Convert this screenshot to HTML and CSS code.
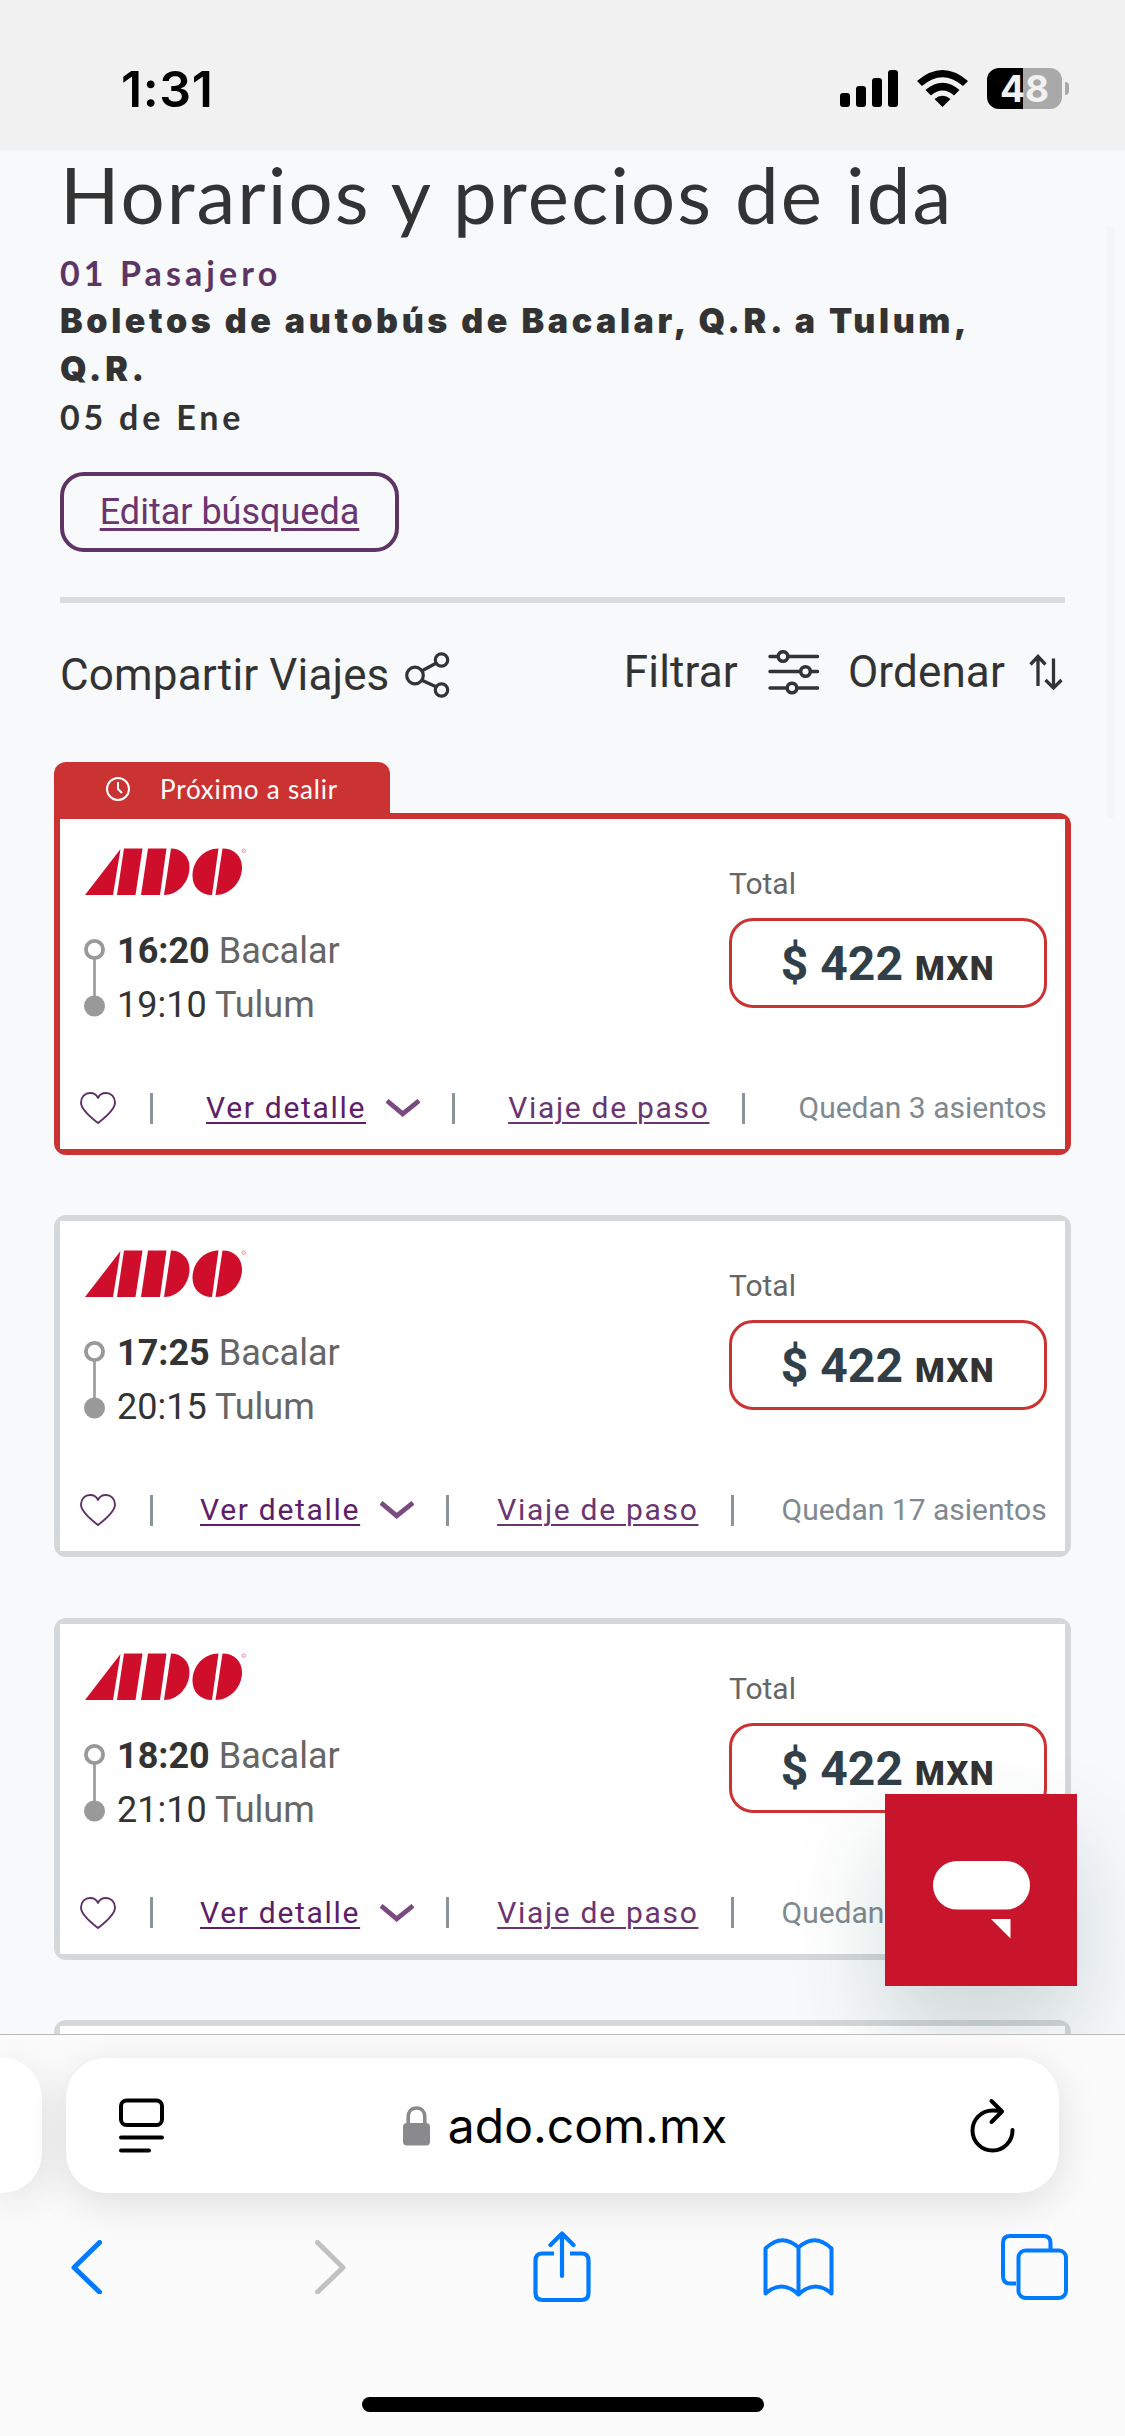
FILE: index.html
```html
<!DOCTYPE html>
<html lang="es">
<head>
<meta charset="utf-8">
<title>Horarios y precios de ida</title>
<link rel="stylesheet" href="styles.css">
</head>
<body>
<svg class="sprite" width="0" height="0" aria-hidden="true">
  <symbol id="logo" viewBox="0 0 162 48">
    <g fill="#cf0e2c">
      <path d="M0 47 35.500 1 28 47Z"/>
      <path d="M39 .5H57.500L50.500 47H32Z"/>
      <path d="M63 .5H81.500L75 47H56Z"/>
      <path d="M86 .5C96 .5 104.500 8 104.500 19 104.500 34 93 47 79 47Z"/>
      <path d="M133.500 .5 127 47C115 47 107.500 39 107.500 27.500 107.500 13 119 .5 133.500 .5Z"/>
      <path d="M137.500 .5C149 .5 157 8 157 19.500 157 34 145 47 130.500 47Z"/>
    </g>
    <circle cx="158.700" cy="2.700" r="1.700" fill="none" stroke="#e58a97" stroke-width="1"/>
  </symbol>
  <symbol id="route" viewBox="0 0 21 78">
    <path d="M10.500 20V60" stroke="#999" stroke-width="2.600"/>
    <circle cx="10.500" cy="10.500" r="8.600" fill="#fff" stroke="#999" stroke-width="3.800"/>
    <circle cx="10.500" cy="67" r="10.500" fill="#999"/>
  </symbol>
  <symbol id="heart" viewBox="0 0 36 32">
    <path d="M18 31C13 27 1 18.500 1 10.500 1 5 5 1 10 1 14 1 17 3.500 18 6 19 3.500 22 1 26 1 31 1 35 5 35 10.500 35 18.500 23 27 18 31Z" fill="none" stroke="#5f3068" stroke-width="1.900" stroke-linejoin="round"/>
  </symbol>
  <symbol id="chevron" viewBox="0 0 34 18">
    <path d="M1 1.800 16.700 14.800 33 1.800" fill="none" stroke="#7a4a80" stroke-width="4.800"/>
  </symbol>
</svg>

<div class="phone">
  <header class="status">
    <span class="clock">1:31</span>
    <div class="status-icons">
      <svg class="signal" width="58" height="37" viewBox="0 0 58 37"><rect y="23" width="10" height="14" rx="3"/><rect x="16" y="16" width="10" height="21" rx="3"/><rect x="32" y="8" width="10" height="29" rx="3"/><rect x="48" width="10" height="37" rx="3"/></svg>
      <svg class="wifi" width="51" height="37" viewBox="0 0 51 37"><path d="M0 11Q25.500-11 51 11L46 16Q25.500-1.500 5 16Z"/><path d="M8.500 20Q25.500 5.500 42.500 20L37 25.500Q25.500 15.500 14 25.500Z"/><path d="M17.500 29Q25.500 22.500 33.500 29L25.500 37Z"/></svg>
      <div class="battery"><span class="battery-text">48</span></div>
      <span class="battery-cap"></span>
    </div>
  </header>

  <main class="page">
    <h1 class="title">Horarios y precios de ida</h1>
    <p class="passengers">01 Pasajero</p>
    <p class="journey">Boletos de autobús de Bacalar, Q.R. a Tulum,<br>Q.R.</p>
    <p class="date">05 de Ene</p>
    <a class="edit"><span class="edit-text">Editar búsqueda</span></a>
    <hr class="rule">
    <div class="tools">
      <div class="tool tool-share"><span>Compartir Viajes</span>
        <svg width="45" height="46" viewBox="0 0 45 46" fill="none" stroke="#333" stroke-width="3.200"><circle cx="10" cy="23.500" r="8.300"/><circle cx="36.500" cy="8" r="6.200"/><circle cx="36.500" cy="38" r="6.200"/><path d="M17.500 18.500 30.500 11.500M17.500 28.500 31.500 35"/></svg>
      </div>
      <div class="tool tool-filter"><span>Filtrar</span>
        <svg width="51" height="45" viewBox="0 0 51 45" fill="none" stroke="#333" stroke-width="3.500" stroke-linecap="round"><path d="M2 6.500H49.500M2 21.500H49.500M2 38H49.500"/><g fill="#f8f9fb"><circle cx="15" cy="6.500" r="4.800"/><circle cx="37.500" cy="21.500" r="4.800"/><circle cx="24" cy="38" r="4.800"/></g></svg>
      </div>
      <div class="tool tool-sort"><span>Ordenar</span>
        <svg width="34" height="37" viewBox="0 0 34 37" fill="none" stroke="#333" stroke-width="3.300"><path d="M9 32V3M1.500 10.500 9 2.500 16.500 10.500M24.500 4.500V34M16.500 26 24.500 34 32.500 26"/></svg>
      </div>
    </div>

    <div class="trips">
      <div class="badge">
        <svg width="24" height="24" viewBox="0 0 24 24" fill="none" stroke="#fff" stroke-width="2"><circle cx="12" cy="12" r="11"/><path d="M12 5V12L16 16"/></svg>
        <span class="badge-text">Próximo a salir</span>
      </div>
      <article class="card card-next">
        <div class="card-top">
          <div class="trip">
            <svg class="logo" width="162" height="48"><use href="#logo"/></svg>
            <div class="stops">
              <svg width="21" height="78"><use href="#route"/></svg>
              <div class="stop-list"><div class="stop"><b class="time">16:20</b> Bacalar</div><div class="stop"><span class="time">19:10</span> Tulum</div></div>
            </div>
          </div>
          <div class="fare"><span class="total">Total</span><div class="price"><span class="amount">$ 422</span><span class="currency">MXN</span></div></div>
        </div>
        <div class="card-foot">
          <svg width="36" height="32"><use href="#heart"/></svg><i class="bar bar-first"></i>
          <a class="link detail">Ver detalle</a><svg class="chev" width="34" height="18"><use href="#chevron"/></svg><i class="bar"></i>
          <a class="link stopover">Viaje de paso</a><i class="bar"></i><span class="seats">Quedan 3 asientos</span>
        </div>
      </article>
      <article class="card">
        <div class="card-top">
          <div class="trip">
            <svg class="logo" width="162" height="48"><use href="#logo"/></svg>
            <div class="stops">
              <svg width="21" height="78"><use href="#route"/></svg>
              <div class="stop-list"><div class="stop"><b class="time">17:25</b> Bacalar</div><div class="stop"><span class="time">20:15</span> Tulum</div></div>
            </div>
          </div>
          <div class="fare"><span class="total">Total</span><div class="price"><span class="amount">$ 422</span><span class="currency">MXN</span></div></div>
        </div>
        <div class="card-foot">
          <svg width="36" height="32"><use href="#heart"/></svg><i class="bar bar-first"></i>
          <a class="link detail">Ver detalle</a><svg class="chev" width="34" height="18"><use href="#chevron"/></svg><i class="bar"></i>
          <a class="link stopover">Viaje de paso</a><i class="bar"></i><span class="seats">Quedan 17 asientos</span>
        </div>
      </article>
      <article class="card">
        <div class="card-top">
          <div class="trip">
            <svg class="logo" width="162" height="48"><use href="#logo"/></svg>
            <div class="stops">
              <svg width="21" height="78"><use href="#route"/></svg>
              <div class="stop-list"><div class="stop"><b class="time">18:20</b> Bacalar</div><div class="stop"><span class="time">21:10</span> Tulum</div></div>
            </div>
          </div>
          <div class="fare"><span class="total">Total</span><div class="price"><span class="amount">$ 422</span><span class="currency">MXN</span></div></div>
        </div>
        <div class="card-foot">
          <svg width="36" height="32"><use href="#heart"/></svg><i class="bar bar-first"></i>
          <a class="link detail">Ver detalle</a><svg class="chev" width="34" height="18"><use href="#chevron"/></svg><i class="bar"></i>
          <a class="link stopover">Viaje de paso</a><i class="bar"></i><span class="seats">Quedan</span>
        </div>
      </article>
      <article class="card"></article>
    </div>
    <span class="scrollbar"></span>
    <button class="chat" aria-label="Chat">
      <svg width="97" height="78" viewBox="0 0 97 78" fill="#fff"><rect width="97" height="48.500" rx="24.250"/><path d="M58 58H77.500V77.500Z"/></svg>
    </button>
  </main>

  <footer class="browser">
    <div class="tabs">
      <div class="tab-prev"></div>
      <div class="address">
        <svg width="45" height="55" viewBox="0 0 45 55" fill="none" stroke="#000" stroke-width="4" stroke-linecap="round"><rect x="2" y="2.500" width="41" height="24.500" rx="5.500"/><path d="M2 39.500H43M2 52.500H30"/></svg>
        <div class="host">
          <svg width="27" height="40" viewBox="0 0 27 40"><path d="M5.200 18V11C5.200 5.500 8.500 2 13.500 2S21.800 5.500 21.800 11V18" fill="none" stroke="#8a898e" stroke-width="3.600"/><rect y="17" width="27" height="22.500" rx="4" fill="#8a898e"/></svg>
          <span class="host-text">ado.com.mx</span>
        </div>
        <svg width="45" height="55" viewBox="0 0 45 55" fill="none" stroke="#000" stroke-width="4" stroke-linecap="round" stroke-linejoin="round"><path d="M42.500 32A20 20 0 1 1 22.500 12.500Q28 12.500 32 13.500M21.500 3 32 13.500 21.500 24"/></svg>
      </div>
    </div>
    <nav class="toolbar">
      <svg class="back" width="31" height="54" viewBox="0 0 31 54" fill="none" stroke="#007aff" stroke-width="5" stroke-linecap="round" stroke-linejoin="round"><path d="M28.500 2.500 3 27.500 28.500 52"/></svg>
      <svg class="forward" width="31" height="54" viewBox="0 0 31 54" fill="none" stroke="#c1c1c2" stroke-width="5" stroke-linecap="round" stroke-linejoin="round"><path d="M2.500 2.500 28 27.500 2.500 52"/></svg>
      <svg class="share" width="58" height="72" viewBox="0 0 58 72" fill="none" stroke="#007aff" stroke-width="4.200"><path d="M21 22.500H9.500Q2.500 22.500 2.500 29.500V62Q2.500 69 9.500 69H48.500Q55.500 69 55.500 62V29.500Q55.500 22.500 48.500 22.500H37"/><path d="M29 45V3M17.500 14 29 2.500 40.500 14" stroke-linecap="round" stroke-linejoin="round"/></svg>
      <svg class="book" width="71" height="59" viewBox="0 0 71 59" fill="none" stroke="#007aff" stroke-width="4" stroke-linecap="round" stroke-linejoin="round"><path d="M35.500 9.500V56.500Q19 41 2.500 55.500V10.500Q19-5.500 35.500 9.500Q52-5.500 68.500 10.500V55.500Q52 41 35.500 56.500"/></svg>
      <svg width="67" height="66" viewBox="0 0 67 66" fill="none" stroke="#007aff" stroke-width="4"><path d="M49.500 15V9Q49.500 2 42.500 2H9Q2 2 2 9V42Q2 49.500 9 49.500H15"/><rect x="17.500" y="16.500" width="47.500" height="47.500" rx="7"/></svg>
    </nav>
    <div class="home"></div>
  </footer>
</div>
</body>
</html>
```
FILE: styles.css
```css
* { box-sizing: border-box; }
body { margin: 0; background: #f8f9fb; font-family: Roboto, "Liberation Sans", sans-serif; color: #333; }
h1, p, hr { margin: 0; }
svg { display: block; flex: none; }
.sprite { position: absolute; }
.phone { width: 1125px; height: 2436px; display: flex; flex-direction: column; overflow: hidden; }

/* Status bar */
.status { height: 150px; flex: none; background: #f1f1f1; display: flex; justify-content: space-between; align-items: flex-start; padding: 68px 56px 0 121px; }
.clock { font: 600 50px/43px Inter, sans-serif; color: #000; letter-spacing: .6px; }
.status-icons { display: flex; align-items: center; height: 41px; }
.wifi { margin: 0 19px; }
.battery { width: 75px; height: 41px; border-radius: 12px; background: linear-gradient(90deg, #000 36px, #a9a9a9 36px); text-align: center; }
.battery-text { font: 700 37px/41px Inter, sans-serif; color: #f1f1f1; }
.battery-cap { width: 4px; height: 13px; margin-left: 3px; background: #a9a9a9; border-radius: 0 4px 4px 0; }

/* Page */
.page { flex: 1; min-height: 0; position: relative; background: #f8f9fb; padding: 0 60px; }
.title { font: 400 78px/88px Lato, sans-serif; margin-bottom: 11px; white-space: nowrap; letter-spacing: 2.050px; }
.passengers, .journey, .date { font: 700 34px/48px Lato, sans-serif; letter-spacing: 4.100px; white-space: nowrap; }
.passengers { color: #5d3463; }
.date { letter-spacing: 3.800px; }
.journey { font-family: Inter, sans-serif; font-weight: 900; font-size: 34px; letter-spacing: 3.600px; }
.edit { display: flex; justify-content: center; align-items: center; width: 339px; height: 80px; margin-top: 31px; border: 4px solid #5d3463; border-radius: 24px; }
.edit-text { font-size: 36px; line-height: 48px; color: #6a3570; text-decoration: underline; text-decoration-thickness: 3px; text-underline-offset: 4px; white-space: nowrap; }
.rule { height: 6px; border: 0; background: #dcdcdc; margin-top: 45px; width: 1005px; }
.tools { display: flex; align-items: flex-start; height: 159px; padding: 43px 2px 0 0; font-size: 44px; line-height: 52px; letter-spacing: .15px; white-space: nowrap; }
.tool { display: flex; align-items: center; }
.tool-share { margin-top: 3px; gap: 16px; }
.tool-filter { margin-left: auto; gap: 30px; }
.tool-sort { margin-left: 29px; gap: 24px; }

/* Trip cards */
.trips { margin: 0 -6px; display: flex; flex-direction: column; align-items: flex-start; width: 1017px; }
.badge { width: 336px; height: 51px; background: #cb3332; border-radius: 12px 12px 0 0; display: flex; align-items: center; padding: 3px 0 0 52px; gap: 30px; color: #fff; }
.badge-text { font: 400 26px/32px Lato, sans-serif; letter-spacing: .8px; white-space: nowrap; }
.card { width: 1017px; height: 342px; margin-bottom: 60.33px; flex: none; border-radius: 12px; background: #d5d8da; padding: 6px; }
.card::before { content: ""; display: block; height: 330px; margin-bottom: -330px; background: #fff; }
.card-next { background: #cb3332; border-top-left-radius: 0; }
.card-top { position: relative; display: flex; justify-content: space-between; height: 259px; padding: 29px 18px 0 25px; }
.stops { display: flex; gap: 12px; margin: 32px 0 0 -1px; }
.stops svg { margin-top: 11px; }
.stop-list { margin-top: -4px; color: #666; }
.stop { font-size: 36px; line-height: 54px; white-space: nowrap; }
.time { color: #333; }
.fare { width: 318px; padding-top: 18px; }
.total { display: block; font-size: 30px; line-height: 36px; color: #666; }
.price { height: 90px; margin-top: 16px; border: 3px solid #cb3332; border-radius: 24px; display: flex; justify-content: center; align-items: baseline; line-height: 86px; white-space: nowrap; gap: 12px; }
.amount { font-size: 48px; font-weight: 700; color: #313f49; }
.currency { font-size: 34px; font-weight: 900; letter-spacing: 1.500px; }
.card-foot { position: relative; display: flex; align-items: center; height: 60px; padding: 0 0 0 20px; font-size: 30px; line-height: 40px; white-space: nowrap; }
.bar { flex: none; width: 3px; height: 31px; background: #8a9499; margin-left: 32px; }
.bar-first { margin-left: 34px; }
.link { color: #5d2068; letter-spacing: 1.700px; text-decoration: underline; text-decoration-thickness: 2px; text-underline-offset: 4px; }
.detail { margin-left: 47px; }
.stopover { margin-left: 48px; color: #6a3570; }
.chev { margin-left: 20px; filter: blur(.6px); }
.seats { margin-left: 48px; color: #7f8a90; }
.card-next .detail { margin-left: 53px; }
.card-next .stopover { margin-left: 53px; }
.card-next .seats { margin-left: 54px; }

.scrollbar { position: absolute; left: 1107px; top: 77px; width: 8px; height: 591px; background: #f4f5f7; }
.chat { position: absolute; left: 885px; top: 1644px; width: 192px; height: 192px; border: 0; padding: 67px 0 0 48px; background: #c8152b; display: flex; align-items: flex-start; box-shadow: 0 48px 96px rgba(10, 60, 60, .18); }

/* Browser chrome */
.browser { position: relative; z-index: 1; height: 402px; flex: none; background: #fbfbfb; border-top: 1px solid #bbb; overflow: hidden; }
.tabs { display: flex; gap: 24px; padding-top: 23px; }
.tab-prev, .address { height: 135px; background: #fff; box-shadow: 0 10px 44px rgba(0, 0, 0, .12); }
.tab-prev { width: 42px; border-radius: 0 40px 40px 0; }
.address { width: 993px; border-radius: 40px; display: flex; align-items: center; justify-content: space-between; padding: 0 44px 0 53px; }
.host { display: flex; align-items: center; gap: 18px; margin-right: 4px; }
.host-text { font: 400 48px/60px Inter, sans-serif; color: #000; }
.toolbar { display: flex; align-items: center; height: 72px; margin-top: 38px; padding: 0 57px 0 71px; }
.back { margin-right: 213px; }
.forward { margin-right: 187px; }
.share { margin-right: 172px; }
.book { margin-right: 167px; }
.home { width: 402px; height: 15px; border-radius: 8px; background: #000; margin: 94px auto 0; }
```
